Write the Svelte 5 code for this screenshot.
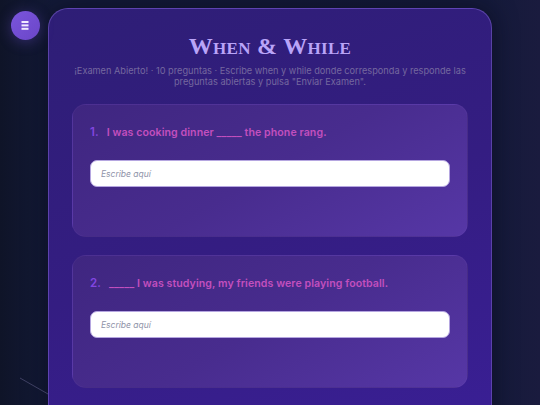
<script>
	const preguntas = [
		{ n: 1, texto: "I was cooking dinner _____ the phone rang." },
		{ n: 2, texto: "_____ I was studying, my friends were playing football." }
	];
</script>

<div class="page">
	<svg class="linea" width="60" height="40" viewBox="0 0 60 40"><line x1="20" y1="378" x2="48" y2="394" transform="translate(0 -370)" stroke="#4a4a70" stroke-width="0.8" /></svg>

	<button class="menu" aria-label="Menu">
		<svg width="8" height="9" viewBox="0 0 8 9"><rect width="7" height="2" x="0.5" y="0" fill="#f1eaff" /><rect width="7" height="2" x="0.5" y="3.4" fill="#f1eaff" /><rect width="7" height="2" x="0.5" y="6.8" fill="#f1eaff" /></svg>
	</button>

	<main class="panel">
		<h1>When &amp; While</h1>
		<p class="desc">¡Examen Abierto! · 10 preguntas · Escribe when y while donde corresponda y responde las preguntas abiertas y pulsa "Enviar Examen".</p>

		{#each preguntas as p}
			<section class="card">
				<div class="pregunta">
					<span class="num">{p.n}.</span>
					<span class="texto">{p.texto}</span>
				</div>
				<input type="text" placeholder="Escribe aquí" />
			</section>
		{/each}
	</main>
</div>

<style>
	:global(body) {
		margin: 0;
		background: #12152e;
	}

	.page {
		position: relative;
		height: 405px;
		overflow: hidden;
		padding-top: 8px;
		box-sizing: border-box;
		background: linear-gradient(90deg, #0f1428 0%, #131a38 10%, #141a3a 90%, #1a1b3e 100%);
		font-family: Inter, "Open Sans", sans-serif;
	}

	.linea {
		position: absolute;
		left: 0;
		top: 370px;
	}

	.menu {
		position: absolute;
		left: 10.5px;
		top: 10.5px;
		width: 29px;
		height: 29px;
		padding: 0;
		border: none;
		border-radius: 50%;
		background: linear-gradient(135deg, #7a55dc, #6b46c8);
		box-shadow: 0 2px 14px rgba(124, 85, 230, 0.35);
		display: flex;
		align-items: center;
		justify-content: center;
	}

	.panel {
		width: 444px;
		margin: 0 auto;
		box-sizing: border-box;
		height: 440px;
		padding: 22px 23px;
		border: 1px solid rgba(140, 110, 220, 0.45);
		border-radius: 20px;
		background: linear-gradient(160deg, #2e1e76 0%, #341d82 50%, #3a1f96 100%);
		box-shadow: 0 0 24px rgba(8, 8, 24, 0.6);
	}

	h1 {
		margin: 0;
		text-align: center;
		font-family: "Liberation Serif", serif;
		font-variant: small-caps;
		font-weight: 700;
		font-size: 24px;
		line-height: 30px;
		letter-spacing: 0.3px;
		color: #b9a4f8;
	}

	.desc {
		margin: 5px 0 17px;
		text-align: center;
		font-size: 9.2px;
		line-height: 10.5px;
		color: #75689f;
	}

	.card {
		box-sizing: border-box;
		height: 133px;
		margin-bottom: 18px;
		padding: 20px 17px;
		border: 1px solid rgba(150, 120, 220, 0.08);
		border-radius: 14px;
		background: linear-gradient(150deg, #3f2680 0%, #482c8e 50%, #5637a6 100%);
	}

	.pregunta {
		display: flex;
		align-items: baseline;
		gap: 8px;
		height: 35px;
		font-size: 10.6px;
		line-height: 14px;
		font-weight: 600;
		letter-spacing: 0.08px;
	}

	.num {
		font-size: 11.5px;
		color: #8246e0;
	}

	.texto {
		color: #c24fbe;
	}

	input {
		display: block;
		box-sizing: border-box;
		width: 100%;
		height: 27px;
		padding: 0 10px;
		border: 1px solid #b5a6e0;
		border-radius: 7px;
		background: #fff;
		font-family: inherit;
		font-size: 8.5px;
		outline: none;
	}

	input::placeholder {
		color: #8f93a8;
		font-style: italic;
	}
</style>
